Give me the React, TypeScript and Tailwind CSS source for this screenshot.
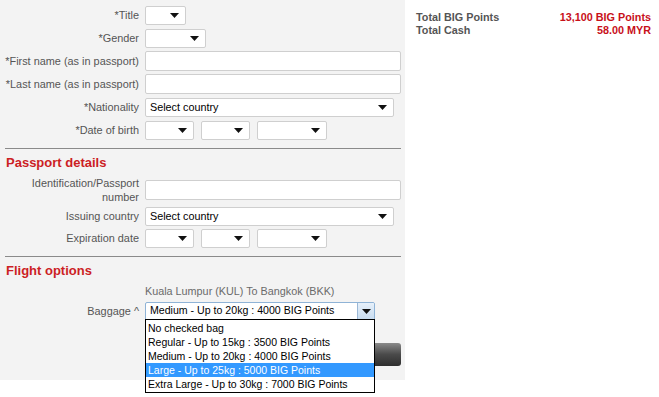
import React from "react";

const font = { fontFamily: '"Liberation Sans", Arial, sans-serif' };

function Arrow() {
  return (
    <svg width="9" height="5" viewBox="0 0 9 5" className="shrink-0">
      <path d="M0 0h9L4.5 5z" fill="#111" />
    </svg>
  );
}

function Select({ w, text = "" }: { w: string; text?: string }) {
  return (
    <div
      className={`${w} flex h-[19px] items-center justify-between rounded-[2px] border border-[#cfcfcf] bg-white pl-[4px] pr-[6px] text-[10.8px] text-black`}
    >
      <span>{text}</span>
      <Arrow />
    </div>
  );
}

function Input() {
  return <div className="h-[20px] w-[256px] rounded-[2px] border border-[#cfcfcf] bg-white" />;
}

function Row({ label, children, h = "h-[20px]" }: { label: React.ReactNode; children: React.ReactNode; h?: string }) {
  return (
    <div className={`flex ${h} items-center`}>
      <div className="w-[135px] whitespace-nowrap pr-[1px] text-right text-[10.9px] leading-[14px] text-[#555]">{label}</div>
      <div className="ml-[5px] flex items-center gap-[7px]">{children}</div>
    </div>
  );
}

function DateSelects() {
  return (
    <>
      <Select w="w-[49px]" />
      <Select w="w-[49px]" />
      <Select w="w-[70px]" />
    </>
  );
}

const baggage = [
  "No checked bag",
  "Regular - Up to 15kg : 3500 BIG Points",
  "Medium - Up to 20kg : 4000 BIG Points",
  "Large - Up to 25kg : 5000 BIG Points",
  "Extra Large - Up to 30kg : 7000 BIG Points",
];

export default function App() {
  return (
    <div className="flex h-[397px] w-[659px] bg-white" style={font}>
      {/* FORM PANEL */}
      <div className="h-[380px] w-[405px] shrink-0 bg-[#f3f3f3] pl-[5px] pr-[4px]">
        <div className="flex flex-col gap-[3px] pt-[5px]">
          <Row label="*Title">
            <Select w="w-[41px]" />
          </Row>
          <Row label="*Gender">
            <Select w="w-[61px]" />
          </Row>
          <Row label="*First name (as in passport)">
            <Input />
          </Row>
          <Row label="*Last name (as in passport)">
            <Input />
          </Row>
          <Row label="*Nationality">
            <Select w="w-[249px]" text="Select country" />
          </Row>
          <Row label="*Date of birth">
            <DateSelects />
          </Row>
        </div>

        <div className="mt-[8px] h-px w-[396px] bg-[#8a8a8a]" />

        <h3 className="mt-[5px] pl-[1px] text-[13px] font-bold leading-[18px] text-[#cc1e24]">Passport details</h3>
        <div className="mt-[4px] flex flex-col gap-[2px]">
          <Row label={<>Identification/Passport<br />number</>} h="h-[28px]">
            <Input />
          </Row>
          <Row label="Issuing country">
            <Select w="w-[249px]" text="Select country" />
          </Row>
          <Row label="Expiration date">
            <DateSelects />
          </Row>
        </div>

        <div className="mt-[8px] h-px w-[396px] bg-[#8a8a8a]" />

        <h3 className="mt-[5px] pl-[1px] text-[13px] font-bold leading-[18px] text-[#cc1e24]">Flight options</h3>
        <div className="ml-[140px] mt-[4px] text-[10.8px] leading-[14px] text-[#6a6a6a]">Kuala Lumpur (KUL) To Bangkok (BKK)</div>
        <div className="relative mt-[3px]">
          <Row label="Baggage ^">
            <div className="flex h-[19px] w-[230px] items-center justify-between rounded-[2px] border border-[#8fb3d6] bg-white pl-[4px] text-[10.6px] text-black">
              <span>Medium - Up to 20kg : 4000 BIG Points</span>
              <div className="flex h-full w-[17px] items-center justify-center rounded-r-[2px] border-l border-[#9bb8d6] bg-gradient-to-b from-[#e6f0fa] to-[#c7dbef]">
                <Arrow />
              </div>
            </div>
          </Row>

          <div className="mt-[22px] flex justify-end">
            <div className="h-[23px] w-[120px] rounded-[3px] bg-gradient-to-b from-[#8a8a8a] via-[#4a4a4a] to-[#2e2e2e]" />
          </div>

          {/* OPEN DROPDOWN */}
          <div className="absolute left-[140px] top-[18px] w-[230px] border border-black bg-white py-[1px] text-[10.5px] leading-[14px] text-black">
            {baggage.map((b) => (
              <div
                key={b}
                className={b.startsWith("Large") ? "bg-[#3399ff] pl-[2px] text-white" : "pl-[2px]"}
              >
                {b}
              </div>
            ))}
          </div>
        </div>
      </div>

      {/* TOTALS */}
      <div className="ml-[11px] mt-[11px] w-[235px] text-[10.8px] font-bold leading-[13px]">
        <div className="flex justify-between">
          <span className="text-[#555]">Total BIG Points</span>
          <span className="text-[#c8101a]">13,100 BIG Points</span>
        </div>
        <div className="flex justify-between">
          <span className="text-[#555]">Total Cash</span>
          <span className="text-[#c8101a]">58.00 MYR</span>
        </div>
      </div>
    </div>
  );
}
